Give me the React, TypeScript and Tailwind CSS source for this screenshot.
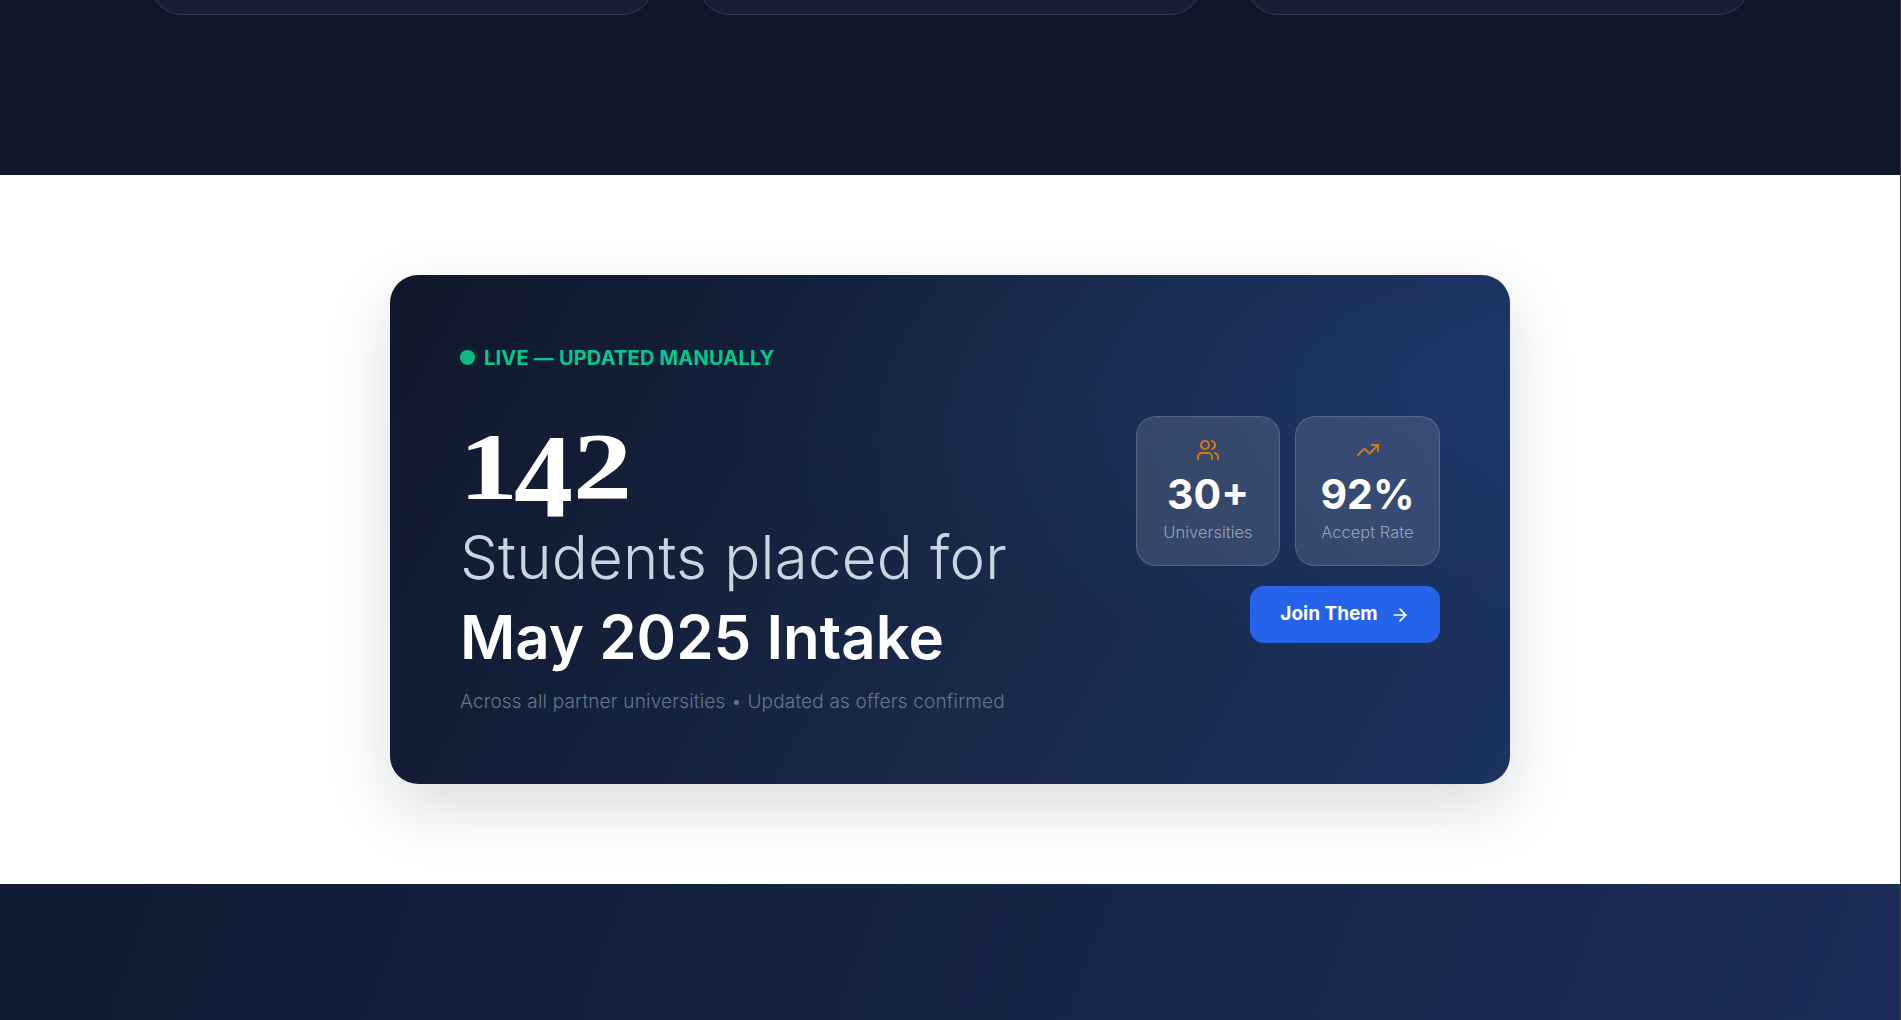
import { Users, TrendingUp, ArrowRight } from 'lucide-react'

const STATS = [
  { icon: Users, value: '30+', label: 'Universities', width: 'w-[144px]' },
  { icon: TrendingUp, value: '92%', label: 'Accept Rate', width: 'w-[145px]' },
]

export default function App() {
  return (
    <div className="h-screen overflow-hidden border-r border-[#3a3a3a] bg-white font-['Inter',sans-serif]">
      {/* end of the section above */}
      <section className="h-[175px] overflow-hidden bg-[#0f172a]">
        <div className="mx-auto grid w-[1600px] grid-cols-3 gap-11">
          {[0, 1, 2].map(i => (
            <div key={i} className="-mt-[85px] h-[100px] rounded-[32px] border border-[#2f3f55] bg-[#161f36]" />
          ))}
        </div>
      </section>

      {/* live counter */}
      <section className="flex h-[709px] items-center justify-center bg-white">
        <div className="flex h-[509px] w-[1120px] items-center justify-between rounded-[28px] bg-[radial-gradient(ellipse_at_100%_20%,rgba(37,70,140,0.35),transparent_50%),linear-gradient(120deg,#0f172a_0%,#182848_55%,#1c3260_100%)] px-[70px] shadow-[0_24px_64px_rgba(15,23,42,0.15)]">
          <div>
            <div className="flex items-center gap-[9px]">
              <span className="h-[15px] w-[15px] rounded-full bg-[#10b981] shadow-[0_0_0_4px_rgba(16,185,129,0.05)]" />
              <span className="text-[20px] leading-7 font-bold tracking-[0.01em] text-[#00c98d]">LIVE — UPDATED MANUALLY</span>
            </div>
            <div className="mt-[14px] flex h-[125px] items-start pt-[46px] font-['Liberation_Serif',serif] text-[118px] leading-[90px] font-bold text-white">
              <span className="-ml-[1px] inline-block origin-top scale-y-[0.8]">1</span>
              <span className="-ml-1 inline-block origin-top">4</span>
              <span className="inline-block origin-top scale-y-[0.8]">2</span>
            </div>
            <p className="pt-[6px] text-[60px] leading-[80px] font-light tracking-[0.2px] text-[#cbd5e1]">Students placed for</p>
            <p className="text-[60px] leading-[80px] font-semibold text-white">May 2025 Intake</p>
            <p className="mt-[11px] text-[19px] leading-7 font-light tracking-[0.18px] text-[#64748b]">Across all partner universities • Updated as offers confirmed</p>
          </div>

          <div className="flex flex-col items-end gap-5">
            <div className="flex gap-[15px]">
              {STATS.map(s => (
                <div key={s.label} className={`flex h-[150px] ${s.width} flex-col items-center rounded-[20px] border border-white/15 bg-white/12 pt-[21px]`}>
                  <s.icon size={24} className="text-[#d97706]" />
                  <div className="mt-[6px] text-[41px] leading-[52px] font-bold text-white">{s.value}</div>
                  <div className="text-[16.5px] leading-6 font-light text-[#94a3b8]">{s.label}</div>
                </div>
              ))}
            </div>
            <button className="flex h-[57px] w-[190px] items-center justify-center gap-3 rounded-[14px] bg-[#2563eb] text-[19px] font-bold text-white">
              Join Them
              <ArrowRight size={20} />
            </button>
          </div>
        </div>
      </section>

      {/* start of the section below */}
      <section className="h-[200px] bg-[linear-gradient(110deg,#101a31_0%,#1c2d5a_100%)]" />
    </div>
  )
}
